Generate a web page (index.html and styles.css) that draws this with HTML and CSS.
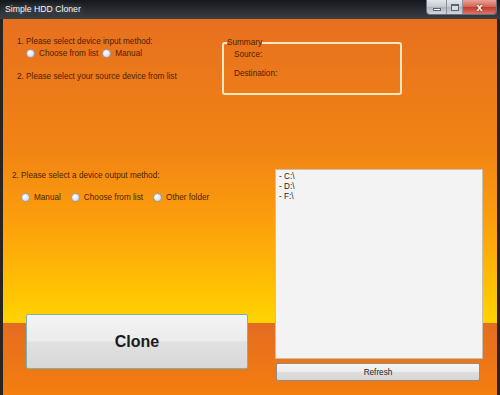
FILE: index.html
```html
<!DOCTYPE html>
<html lang="en">
<head>
    <meta charset="UTF-8">
    <title>Simple HDD Cloner</title>
    <link rel="stylesheet" href="styles.css">
</head>
<body>
    <div class="window">
        <div class="titlebar">
            <span class="title">Simple HDD Cloner</span>
            <div class="controls">
                <span class="ctl ctl-min"><i></i></span>
                <span class="ctl ctl-max"><i></i></span>
                <span class="ctl ctl-close">x</span>
            </div>
        </div>

        <div class="client">
            <div class="top">
                <div class="input-block">
                    <p class="label">1. Please select device input method:</p>
                    <div class="radios radios-tight">
                        <label class="radio"><span class="dot"></span>Choose from list</label>
                        <label class="radio"><span class="dot"></span>Manual</label>
                    </div>
                    <p class="label source-label">2. Please select your source device from list</p>
                </div>

                <fieldset class="summary">
                    <legend>Summary</legend>
                    <p>Source:</p>
                    <p class="dest">Destination:</p>
                </fieldset>
            </div>

            <div class="bottom">
                <div class="left-col">
                    <p class="label output-label">2. Please select a device output method:</p>
                    <div class="radios radios-wide">
                        <label class="radio"><span class="dot"></span>Manual</label>
                        <label class="radio"><span class="dot"></span>Choose from list</label>
                        <label class="radio"><span class="dot"></span>Other folder</label>
                    </div>
                    <button class="clone-btn">Clone</button>
                </div>

                <div class="right-col">
                    <ul class="drive-list">
                        <li>- C:\</li>
                        <li>- D:\</li>
                        <li>- F:\</li>
                    </ul>
                    <button class="refresh-btn">Refresh</button>
                </div>
            </div>
        </div>
    </div>
</body>
</html>
```

FILE: styles.css
```css
* {
    margin: 0;
    padding: 0;
    box-sizing: border-box;
    font-family: 'Liberation Sans', Arial, sans-serif;
}

body {
    width: 500px;
    height: 395px;
    overflow: hidden;
    background: #2a2420;
}

.window {
    width: 500px;
    height: 395px;
    display: flex;
    flex-direction: column;
}

/* barra de titulo */
.titlebar {
    height: 19px;
    display: flex;
    justify-content: space-between;
    align-items: flex-start;
    background: linear-gradient(to bottom, #15171c, #2c2f36 60%, #3c3f46);
}

.title {
    color: #f4f4f4;
    font-size: 8.7px;
    line-height: 18px;
    padding-left: 5px;
    text-shadow: 0 0 6px #7c8088;
}

.controls {
    display: flex;
    margin-right: 3px;
    height: 15px;
    border: 1px solid #6d7078;
    border-top: none;
    border-radius: 0 0 4px 4px;
    overflow: hidden;
}

.ctl {
    display: flex;
    align-items: center;
    justify-content: center;
    height: 14px;
    background: linear-gradient(to bottom, #e4e7ec, #c3c8d0 50%, #aeb4be 51%, #d2d6dd);
    border-right: 1px solid #8e939b;
}

.ctl-min { width: 20px; }
.ctl-max { width: 16px; }

.ctl-min i {
    width: 8px;
    height: 3px;
    margin-top: 5px;
    background: #fdfdfd;
    border: 1px solid #5f646c;
}

.ctl-max i {
    width: 8px;
    height: 7px;
    border: 1px solid #5f646c;
    border-top-width: 2px;
    background: #d8dce2;
}

.ctl-close {
    width: 33px;
    border-right: none;
    color: #fff;
    font-weight: bold;
    font-size: 11px;
    background: linear-gradient(to bottom, #e6a49a, #d3624f 50%, #c1392a 51%, #d8776a);
    text-shadow: 0 0 2px #5a1a10;
}

/* area del formulario */
.client {
    flex: 1;
    margin: 0 3px;
    display: flex;
    flex-direction: column;
    background: linear-gradient(to bottom,
        #e7701f 0px,
        #f18414 130px,
        #fb9e0c 200px,
        #ffbc06 260px,
        #ffd400 304px,
        #e46c22 304px,
        #f47e0e 376px);
    color: #4a2200;
    font-size: 8.2px;
}

.label {
    line-height: 11px;
    color: #4f2100;
}

.top {
    height: 150px;
    display: flex;
    align-items: flex-start;
}

.input-block {
    width: 205px;
    margin-left: 14px;
    padding-top: 17px;
}

.radios {
    display: flex;
    align-items: center;
}

.radios-tight {
    margin-top: 1px;
    padding-left: 9px;
    gap: 4px;
}

.radio {
    display: flex;
    align-items: center;
    gap: 4px;
    line-height: 11px;
    color: #4f2100;
}

.dot {
    width: 9px;
    height: 9px;
    border-radius: 50%;
    border: 1px solid #9aa0a8;
    background: radial-gradient(circle at 40% 35%, #ffffff, #dfe3e8 60%, #c4c9d0);
}

.source-label {
    margin-top: 12px;
}

.summary {
    width: 180px;
    height: 57px;
    margin-top: 19px;
    border: 2px solid #fde6c2;
    border-radius: 3px;
    padding: 0 10px;
    color: #4f2100;
}

.summary legend {
    padding: 0;
    margin-left: -7px;
    line-height: 9px;
}

.summary p {
    line-height: 11px;
    margin-top: 2px;
}

.summary .dest {
    margin-top: 8px;
}

.bottom {
    flex: 1;
    display: flex;
}

.left-col {
    width: 272px;
    display: flex;
    flex-direction: column;
}

.output-label {
    margin-left: 9px;
    margin-top: 1px;
}

.radios-wide {
    margin-top: 11px;
    padding-left: 18px;
    gap: 10px;
}

.clone-btn {
    margin: 111px 0 0 23px;
    width: 222px;
    height: 55px;
    border: 1px solid #78b4ae;
    border-radius: 2px;
    background: linear-gradient(to bottom, #f4f4f4, #ececec 48%, #e0e0e0 52%, #d8d8d8);
    font-size: 16px;
    font-weight: bold;
    color: #1a1a1a;
}

.right-col {
    width: 208px;
    display: flex;
    flex-direction: column;
}

.drive-list {
    list-style: none;
    height: 190px;
    background: #f3f3f3;
    border: 1px solid #c9bfae;
    padding: 2px 3px;
    color: #222;
}

.drive-list li {
    line-height: 10px;
}

.refresh-btn {
    margin: 4px 0 0 1px;
    width: 204px;
    height: 18px;
    border: 1px solid #8e8e8e;
    border-radius: 2px;
    background: linear-gradient(to bottom, #f4f4f4, #ececec 48%, #dddddd 52%, #d6d6d6);
    font-size: 8.2px;
    color: #222;
}
```
